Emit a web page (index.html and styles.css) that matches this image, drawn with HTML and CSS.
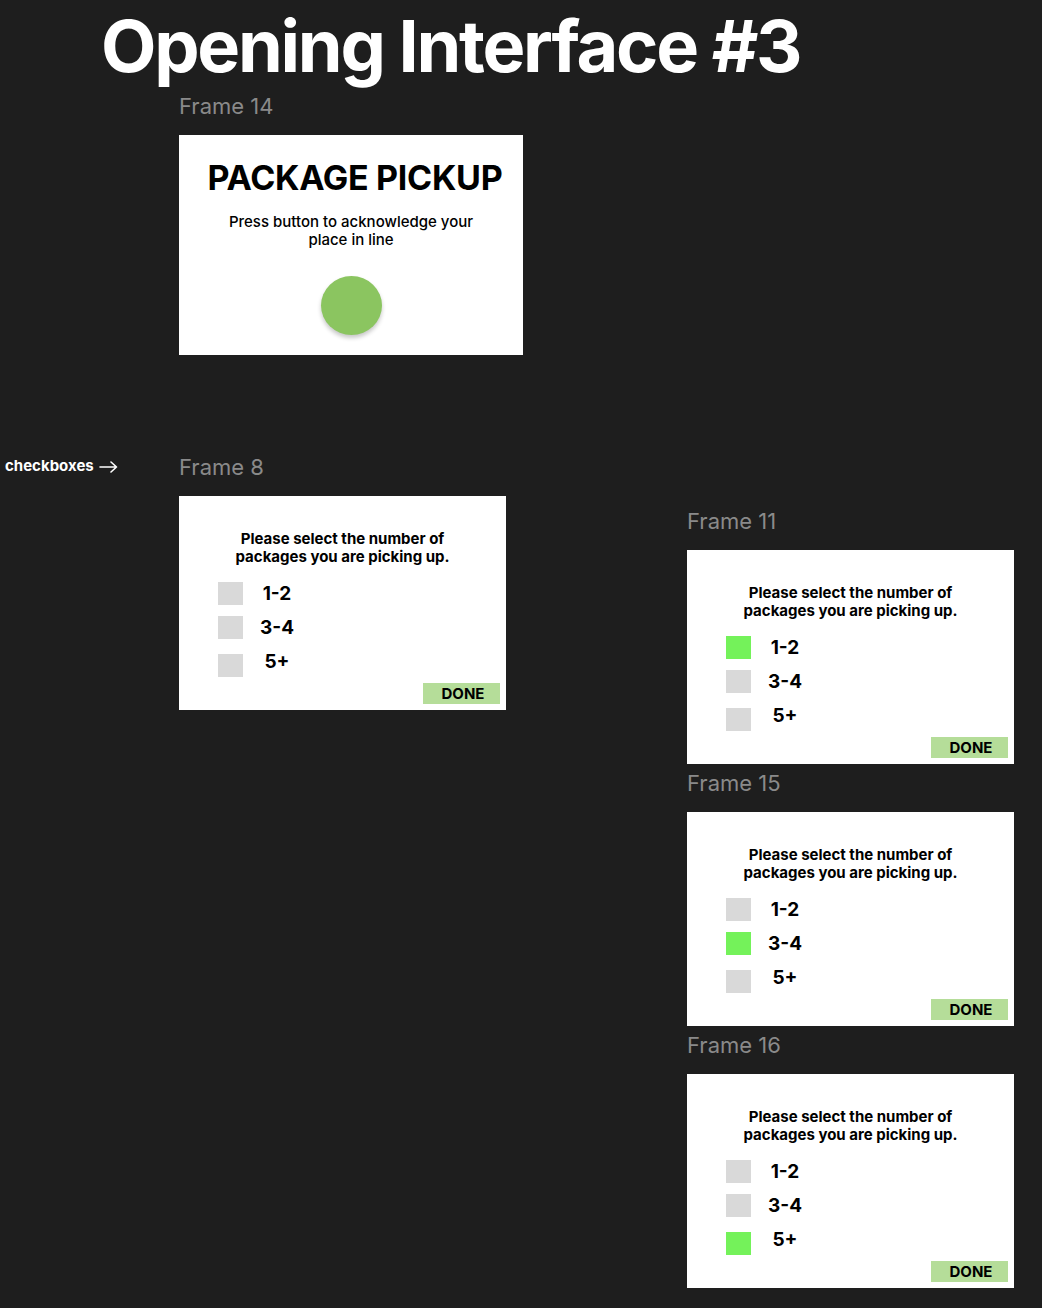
FILE: index.html
```html
<!DOCTYPE html>
<html>
<head>
<meta charset="utf-8">
<link rel="stylesheet" href="styles.css">
</head>
<body>
<div class="canvas">
  <h1 class="title">Opening Interface #3</h1>

  <div class="group g14">
    <div class="label">Frame 14</div>
    <div class="frame pickup">
      <div class="pickup-title">PACKAGE PICKUP</div>
      <div class="pickup-sub">Press button to acknowledge your<br>place in line</div>
      <div class="circle"></div>
    </div>
  </div>

  <div class="note">checkboxes <svg class="arrow" width="19" height="12" viewBox="0 0 19 12"><path d="M1 6H17.5M12 1L17.5 6L12 11" fill="none" stroke="#fff" stroke-width="1.6" stroke-linecap="round" stroke-linejoin="round"/></svg></div>

  <div class="group g8">
    <div class="label">Frame 8</div>
    <div class="frame select">
      <div class="q">Please select the number of<br>packages you are picking up.</div>
      <div class="opts">
        <div class="opt"><span class="box"></span><span class="txt">1-2</span></div>
        <div class="opt"><span class="box"></span><span class="txt">3-4</span></div>
        <div class="opt"><span class="box"></span><span class="txt up">5+</span></div>
      </div>
      <div class="done">DONE</div>
    </div>
  </div>

  <div class="group g11">
    <div class="label">Frame 11</div>
    <div class="frame select">
      <div class="q">Please select the number of<br>packages you are picking up.</div>
      <div class="opts">
        <div class="opt"><span class="box on"></span><span class="txt">1-2</span></div>
        <div class="opt"><span class="box"></span><span class="txt">3-4</span></div>
        <div class="opt"><span class="box"></span><span class="txt up">5+</span></div>
      </div>
      <div class="done">DONE</div>
    </div>
  </div>

  <div class="group g15">
    <div class="label">Frame 15</div>
    <div class="frame select">
      <div class="q">Please select the number of<br>packages you are picking up.</div>
      <div class="opts">
        <div class="opt"><span class="box"></span><span class="txt">1-2</span></div>
        <div class="opt"><span class="box on"></span><span class="txt">3-4</span></div>
        <div class="opt"><span class="box"></span><span class="txt up">5+</span></div>
      </div>
      <div class="done">DONE</div>
    </div>
  </div>

  <div class="group g16">
    <div class="label">Frame 16</div>
    <div class="frame select">
      <div class="q">Please select the number of<br>packages you are picking up.</div>
      <div class="opts">
        <div class="opt"><span class="box"></span><span class="txt">1-2</span></div>
        <div class="opt"><span class="box"></span><span class="txt">3-4</span></div>
        <div class="opt"><span class="box on"></span><span class="txt up">5+</span></div>
      </div>
      <div class="done">DONE</div>
    </div>
  </div>
</div>
</body>
</html>
```

FILE: styles.css
```css
* { box-sizing: border-box; }
html, body { margin: 0; padding: 0; background: #1e1e1e; }
body { font-family: Inter, "Noto Sans", sans-serif; color: #000; }

.canvas { position: relative; width: 1042px; height: 1308px; overflow: hidden; }

.title {
  position: absolute; left: 101px; top: 6px; margin: 0;
  font-size: 72px; line-height: 80px; font-weight: 700; color: #fff;
  letter-spacing: -2.25px; white-space: nowrap;
}

.group { position: absolute; display: flex; flex-direction: column; gap: 16px; }
.g14 { left: 179px; top: 93px; }
.g8 { left: 179px; top: 454px; }
.g11 { left: 687px; top: 508px; }
.g15 { left: 687px; top: 770px; }
.g16 { left: 687px; top: 1032px; }

.label { font-size: 22px; line-height: 26px; color: #8a8a8a; padding-left: 0; }

.note {
  position: absolute; left: 5px; top: 457px;
  display: flex; align-items: center; gap: 5px;
  font-size: 15px; line-height: 18px; font-weight: 700; color: #fff;
}
.arrow { display: block; margin-top: 1px; }

.frame { background: #fff; }

.pickup {
  width: 344px; height: 220px; padding-top: 21px;
  display: flex; flex-direction: column; align-items: center;
}
.pickup-title { font-size: 34px; line-height: 44px; font-weight: 700; padding-left: 8px; letter-spacing: -0.3px; }
.pickup-sub { margin-top: 13px; font-size: 15px; line-height: 18px; font-weight: 500; text-align: center; }
.circle {
  margin-top: 27px; width: 61px; height: 59px; border-radius: 50%;
  background: #8bc560; box-shadow: 0 3px 4px rgba(0,0,0,0.22);
}

.select {
  width: 327px; height: 214px; padding-top: 34px;
  display: flex; flex-direction: column;
}
.q { font-size: 15px; line-height: 18px; font-weight: 700; text-align: center; }
.opts { margin-top: 16px; padding-left: 39px; display: flex; flex-direction: column; }
.opt { display: flex; align-items: center; height: 23px; }
.opt + .opt { margin-top: 11px; }
.opt:nth-child(3) { margin-top: 15px; }
.box { width: 25px; height: 23px; background: #d9d9d9; }
.box.on { background: #74f25a; }
.txt { width: 40px; margin-left: 14px; text-align: center; font-size: 19px; line-height: 23px; font-weight: 700; }
.txt.up { position: relative; top: -4px; }

.done {
  align-self: flex-end; margin: 6px 6px 0 0;
  width: 77px; height: 21px; background: #b5dd99; padding-left: 3px;
  font-size: 15px; line-height: 21px; font-weight: 700; text-align: center;
}
```
